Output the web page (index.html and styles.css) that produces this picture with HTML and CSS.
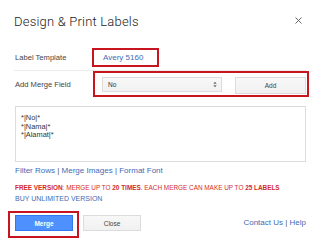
FILE: index.html
```html
<!DOCTYPE html>
<html>
<head>
<meta charset="utf-8">
<link rel="stylesheet" href="styles.css">
</head>
<body>
<div class="dialog">
  <div class="header">
    <div class="title">Design &amp; Print Labels</div>
    <div class="close-x">
      <svg width="7" height="7" viewBox="0 0 7 7"><path d="M0.5 0.5L6.5 6.5M6.5 0.5L0.5 6.5" stroke="#666" stroke-width="1"/></svg>
    </div>
  </div>
  <div class="row row-template">
    <div class="label">Label Template</div>
    <div class="hl hl-template"><span class="link">Avery 5160</span></div>
  </div>
  <div class="sep"></div>
  <div class="row row-merge">
    <div class="label">Add Merge Field</div>
    <div class="hl hl-merge">
      <div class="select"><span>No</span>
        <svg class="arrows" width="4" height="7" viewBox="0 0 4 7"><path d="M0.3 2.8L2 0.8L3.7 2.8ZM0.3 4.2L2 6.2L3.7 4.2Z" fill="#666"/></svg>
      </div>
      <div class="btn btn-add">Add</div>
    </div>
  </div>
  <div class="textarea">
    <div>*|No|*</div>
    <div>*|Nama|*</div>
    <div>*|Alamat|*</div>
  </div>
  <div class="links"><span class="link">Filter Rows</span> | <span class="link">Merge Images</span> | <span class="link">Format Font</span></div>
  <div class="free"><b>FREE VERSION</b>: MERGE UP TO <b>20 TIMES</b>. EACH MERGE CAN MAKE UP TO <b>25 LABELS</b></div>
  <div class="buy link">BUY UNLIMITED VERSION</div>
  <div class="footer">
    <div class="hl hl-btn"><div class="btn btn-merge">Merge</div></div>
    <div class="btn btn-close">Close</div>
    <div class="help"><span class="link">Contact Us</span> | <span class="link">Help</span></div>
  </div>
</div>
</body>
</html>
```
FILE: styles.css
```css
html, body {
  margin: 0;
  padding: 0;
  background: #fff;
}
.dialog {
  width: 319px;
  height: 246px;
  box-sizing: border-box;
  padding: 0 10px 0 15px;
  font-family: "Liberation Sans", Arial, sans-serif;
  color: #333;
  font-size: 8px;
}
.header {
  display: flex;
  justify-content: space-between;
  align-items: center;
  height: 22px;
  padding-top: 10px;
}
.title {
  font-family: Roboto, "Liberation Sans", sans-serif;
  font-size: 13px;
  font-weight: 300;
  letter-spacing: 0.2px;
  color: #222;
  margin-left: -1px;
}
.close-x {
  display: flex;
  margin-right: 7px;
  margin-top: -1px;
}
.row {
  display: flex;
  align-items: center;
}
.label {
  width: 77px;
  color: #444;
  font-size: 7.6px;
}
.row-template {
  margin-top: 16px;
}
.hl {
  border: 2px solid #c8141e;
}
.hl-template {
  height: 15px;
  display: flex;
  align-items: center;
  padding-left: 9px;
  box-sizing: content-box;
  width: 54px;
}
.link {
  color: #3f6cb5;
}
.hl-template .link {
  font-size: 8px;
}
.sep {
  height: 1px;
  background: #ebebeb;
  margin-top: 3px;
  margin-right: 3px;
  margin-left: -1px;
}
.row-merge .label {
  width: 78px;
}
.hl-merge {
  display: flex;
  padding: 4px 1px 1px 7px;
  width: 204px;
  gap: 13px;
}
.select {
  height: 15px;
  border: 1px solid #dcdcdc;
  background: linear-gradient(#f8f8f8, #f1f1f1);
  display: flex;
  align-items: center;
  justify-content: space-between;
  padding: 0 4px 0 5px;
  font-size: 6.5px;
  color: #333;
  box-sizing: border-box;
  width: 120px;
}
.btn {
  display: flex;
  align-items: center;
  justify-content: center;
  box-sizing: border-box;
  font-size: 6.5px;
}
.btn-add {
  width: 71px;
  height: 17px;
  border: 1px solid #dcdcdc;
  background: linear-gradient(#f8f8f8, #f1f1f1);
  color: #444;
}
.textarea {
  margin-top: 9px;
  margin-right: 3px;
  height: 56px;
  box-sizing: border-box;
  border: 1px solid #dcdcdc;
  padding: 7px 5px;
  font-size: 7.4px;
  line-height: 8.5px;
  color: #333;
}
.links {
  margin-top: 4px;
  font-size: 8px;
  line-height: 10px;
  color: #555;
}
.free {
  margin-top: 8px;
  font-size: 6.4px;
  color: #d42a2a;
  line-height: 8px;
  white-space: nowrap;
}
.free b {
  font-weight: bold;
}
.buy {
  margin-top: 2px;
  font-size: 7px;
  line-height: 9px;
}
.footer {
  display: flex;
  align-items: center;
  margin-left: -7px;
  margin-top: 8px;
  margin-right: 3px;
}
.hl-btn {
  padding: 2px 4px 5px 5px;
}
.btn-merge {
  width: 58px;
  height: 16px;
  background: #4d90fe;
  border: 1px solid #3079ed;
  color: #fff;
  font-weight: bold;
}
.btn-close {
  width: 58px;
  height: 16px;
  margin-left: 4px;
  margin-top: -3px;
  border: 1px solid #dcdcdc;
  background: linear-gradient(#f8f8f8, #f1f1f1);
  color: #444;
}
.help {
  margin-left: auto;
  font-size: 8px;
  color: #555;
  margin-top: -4px;
}
```
